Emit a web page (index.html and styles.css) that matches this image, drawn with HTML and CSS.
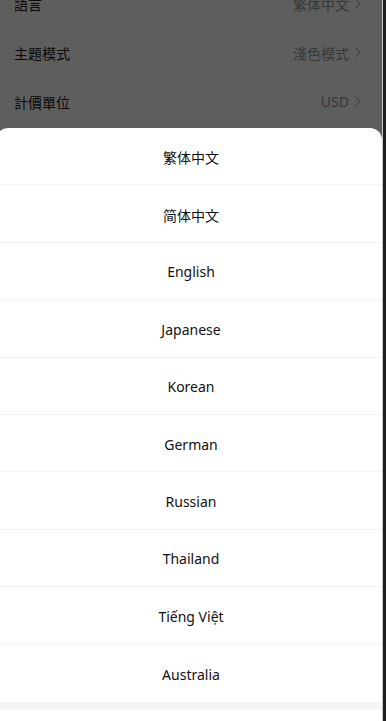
FILE: index.html
```html
<!DOCTYPE html>
<html lang="zh-Hant">
<head>
<meta charset="utf-8">
<title>語言</title>
<link rel="stylesheet" href="styles.css">
</head>
<body>
<div class="viewport">
  <div class="app">
    <ul class="settings">
      <li class="setting"><span class="label">語言</span><span class="value">繁体中文<svg class="chev" viewBox="0 0 6 11" width="6" height="11"><path d="M1 1l4 4.5-4 4.5" fill="none" stroke="currentColor" stroke-width="1"/></svg></span></li>
      <li class="setting"><span class="label">主題模式</span><span class="value">淺色模式<svg class="chev" viewBox="0 0 6 11" width="6" height="11"><path d="M1 1l4 4.5-4 4.5" fill="none" stroke="currentColor" stroke-width="1"/></svg></span></li>
      <li class="setting"><span class="label">計價單位</span><span class="value">USD<svg class="chev" viewBox="0 0 6 11" width="6" height="11"><path d="M1 1l4 4.5-4 4.5" fill="none" stroke="currentColor" stroke-width="1"/></svg></span></li>
      <li class="setting"><span class="label">關於我們</span><span class="value"><svg class="chev" viewBox="0 0 6 11" width="6" height="11"><path d="M1 1l4 4.5-4 4.5" fill="none" stroke="currentColor" stroke-width="1"/></svg></span></li>
    </ul>
    <div class="mask"></div>
    <div class="sheet">
      <ul class="options">
        <li class="option">繁体中文</li>
        <li class="option">简体中文</li>
        <li class="option">English</li>
        <li class="option">Japanese</li>
        <li class="option">Korean</li>
        <li class="option">German</li>
        <li class="option">Russian</li>
        <li class="option">Thailand</li>
        <li class="option">Tiếng Việt</li>
        <li class="option">Australia</li>
      </ul>
      <div class="gap"></div>
      <div class="cancel"></div>
    </div>
  </div>
  <div class="track"></div>
</div>
</body>
</html>
```
FILE: styles.css
```css
* { box-sizing: border-box; }
html, body { margin: 0; padding: 0; }
body {
  background: #1f1f1f;
  font-family: "Noto Sans", "Noto Sans CJK TC", sans-serif;
  color: #111;
}
.viewport {
  display: flex;
  height: 721px;
  overflow: hidden;
}
.app {
  position: relative;
  width: 382px;
  flex: none;
  background: #fff;
  overflow: hidden;
}
.track {
  width: 1px;
  background: #c8c8c8;
  flex: none;
}
.settings {
  list-style: none;
  margin: -21px 0 0;
  padding: 0;
}
.setting {
  display: flex;
  align-items: center;
  justify-content: space-between;
  height: 49px;
  padding: 0 21px 0 14px;
  font-size: 14px;
  font-family: "Noto Sans CJK TC", sans-serif;
  color: #1a1a1a;
}
.value {
  display: flex;
  align-items: center;
  gap: 6px;
  color: #999;
  font-family: "Noto Sans", "Noto Sans CJK TC", sans-serif;
}
.chev { color: #999; }
.mask {
  position: absolute;
  inset: 0;
  background: rgba(0, 0, 0, 0.63);
}
.sheet {
  position: absolute;
  top: 128px;
  left: -4px;
  right: 0;
  background: #fff;
  border-radius: 12px 12px 0 0;
}
.options {
  list-style: none;
  margin: 0;
  padding: 0;
}
.option {
  height: 57.4px;
  display: flex;
  align-items: center;
  justify-content: center;
  padding: 2px 0 0 4px;
  font-size: 14px;
  color: #111;
  border-bottom: 1px solid #f4f4f4;
}
.option:last-child { border-bottom: none; }
.gap {
  height: 8px;
  background: #f5f5f5;
}
.cancel {
  height: 56px;
}
```
